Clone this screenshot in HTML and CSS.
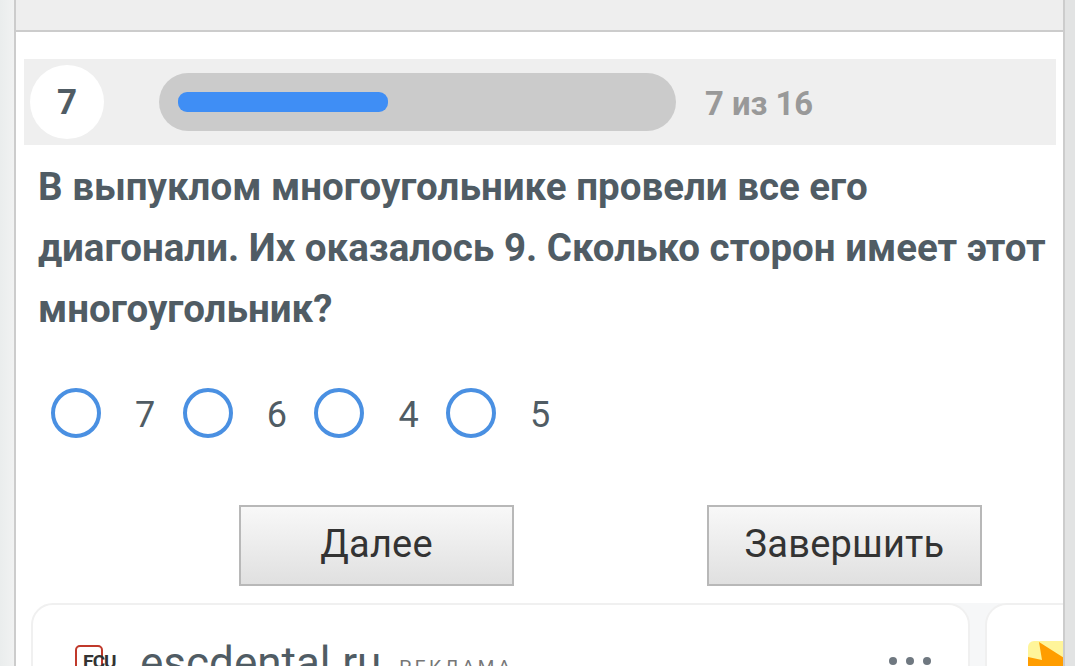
FILE: index.html
```html
<!DOCTYPE html>
<html lang="ru">
<head>
    <meta charset="UTF-8">
    <meta name="viewport" content="width=device-width, initial-scale=1.0">
    <title>Тест</title>
    <link rel="stylesheet" href="styles.css">
</head>
<body>
    <div class="page">
        <div class="top-bar"></div>

        <div class="test-box">
            <div class="progress-band">
                <div class="question-num">7</div>
                <div class="progress-track">
                    <div class="progress-fill"></div>
                </div>
                <div class="progress-label">7 из 16</div>
            </div>

            <h2 class="question">В выпуклом многоугольнике провели все его диагонали. Их оказалось 9. Сколько сторон имеет этот многоугольник?</h2>

            <div class="answers">
                <label class="answer"><span class="radio"></span><span class="answer-text">7</span></label>
                <label class="answer"><span class="radio"></span><span class="answer-text">6</span></label>
                <label class="answer"><span class="radio"></span><span class="answer-text">4</span></label>
                <label class="answer"><span class="radio"></span><span class="answer-text">5</span></label>
            </div>

            <div class="buttons">
                <button class="btn">Далее</button>
                <button class="btn">Завершить</button>
            </div>
        </div>

        <!-- Ad carousel -->
        <div class="ads">
            <div class="ad-card">
                <div class="ad-head">
                    <span class="ad-logo">ECU</span>
                    <span class="ad-domain">escdental.ru</span>
                    <span class="ad-tag">РЕКЛАМА</span>
                </div>
                <div class="ad-dots"><i></i><i></i><i></i></div>
            </div>
            <div class="ad-card ad-card-next">
                <svg class="ad-icon" width="36" height="30" viewBox="0 0 36 30">
                    <rect width="36" height="30" fill="#fff59a"/>
                    <path d="M0 16 L14 19 L11 1 L36 17 L36 30 L0 30 Z" fill="#ff9d00"/>
                </svg>
            </div>
        </div>
    </div>
</body>
</html>
```

FILE: styles.css
```css
* {
    margin: 0;
    padding: 0;
    box-sizing: border-box;
}

html, body {
    height: 666px;
    overflow: hidden;
}

body {
    font-family: 'Roboto', 'Liberation Sans', sans-serif;
    background: linear-gradient(to right, #eaeded, #f1f2f2 14px, #e2e3e3 14px);
    color: #505c64;
}

.page {
    width: 1051px;
    height: 666px;
    margin-left: 14px;
    background-color: #fff;
    border-left: 2px solid #ccc;
    border-right: 2px solid #ccc;
    overflow: hidden;
}

.top-bar {
    height: 32px;
    background-color: #eee;
    border-bottom: 2px solid #ccc;
}

.test-box {
    padding: 27px 8px 0;
}

.progress-band {
    display: flex;
    align-items: center;
    width: 1032px;
    height: 86px;
    padding-left: 6px;
    background-color: #efefef;
}

.question-num {
    display: flex;
    justify-content: center;
    align-items: center;
    width: 74px;
    height: 74px;
    border-radius: 50%;
    background-color: #fff;
    font-size: 35px;
    font-weight: 700;
}

.progress-track {
    width: 517px;
    height: 58px;
    margin-left: 55px;
    padding: 19px;
    border-radius: 29px;
    background-color: #cbcbcb;
}

.progress-fill {
    width: 210px;
    height: 20px;
    border-radius: 9px;
    background-color: #3f8ef5;
}

.progress-label {
    margin-left: 29px;
    padding-top: 4px;
    font-size: 32.8px;
    font-weight: 700;
    color: #999;
}

.question {
    margin-top: 11px;
    padding-left: 14px;
    font-size: 38.5px;
    line-height: 61px;
    font-weight: 700;
    color: #505c64;
}

.answers {
    display: flex;
    margin-top: 49px;
    padding-left: 27px;
}

.answer {
    display: flex;
    align-items: center;
    width: 131.7px;
    height: 50px;
}

.radio {
    width: 50px;
    height: 50px;
    border: 4px solid #4a90e2;
    border-radius: 50%;
}

.answer-text {
    margin-left: 34px;
    padding-top: 4px;
    font-size: 36px;
}

.buttons {
    display: flex;
    gap: 193px;
    margin-top: 67px;
    padding-left: 215px;
}

.btn {
    width: 275px;
    height: 81px;
    padding-bottom: 3px;
    border: 2px solid #b8b8b8;
    background: linear-gradient(to bottom, #f8f8f8, #e0e0e0);
    font-family: inherit;
    font-size: 38px;
    letter-spacing: 0.2px;
    color: #333;
}

.ads {
    display: flex;
    gap: 15px;
    margin-top: 17px;
    padding-left: 15px;
    background: linear-gradient(to right, #fff 500px, #f6f7f8 500px);
}

.ad-card {
    position: relative;
    flex: none;
    width: 939px;
    height: 120px;
    padding: 34px 0 0 42px;
    background-color: #fff;
    border: 2px solid #f0f0f0;
    border-radius: 22px 22px 0 0;
}

.ad-head {
    display: flex;
    align-items: flex-start;
}

.ad-logo {
    width: 28px;
    height: 36px;
    margin-top: 6px;
    margin-right: 37px;
    padding-left: 6px;
    border: 2px solid #c0392b;
    border-radius: 5px 5px 0 0;
    font-size: 19px;
    line-height: 30px;
    font-weight: 700;
    letter-spacing: -1px;
    white-space: nowrap;
    color: #333;
}

.ad-domain {
    font-size: 44px;
    line-height: 48px;
    color: #505c64;
}

.ad-tag {
    margin-top: 18px;
    margin-left: 18px;
    font-size: 19px;
    line-height: 20px;
    letter-spacing: 3.5px;
    color: #777;
}

.ad-dots {
    position: absolute;
    top: 52px;
    right: 37px;
    display: flex;
    gap: 9px;
}

.ad-dots i {
    width: 8px;
    height: 8px;
    border-radius: 50%;
    background-color: #6f7880;
}

.ad-card-next {
    padding: 36px 0 0 41px;
}

.ad-icon {
    display: block;
    border-radius: 6px 0 0 0;
}
```
